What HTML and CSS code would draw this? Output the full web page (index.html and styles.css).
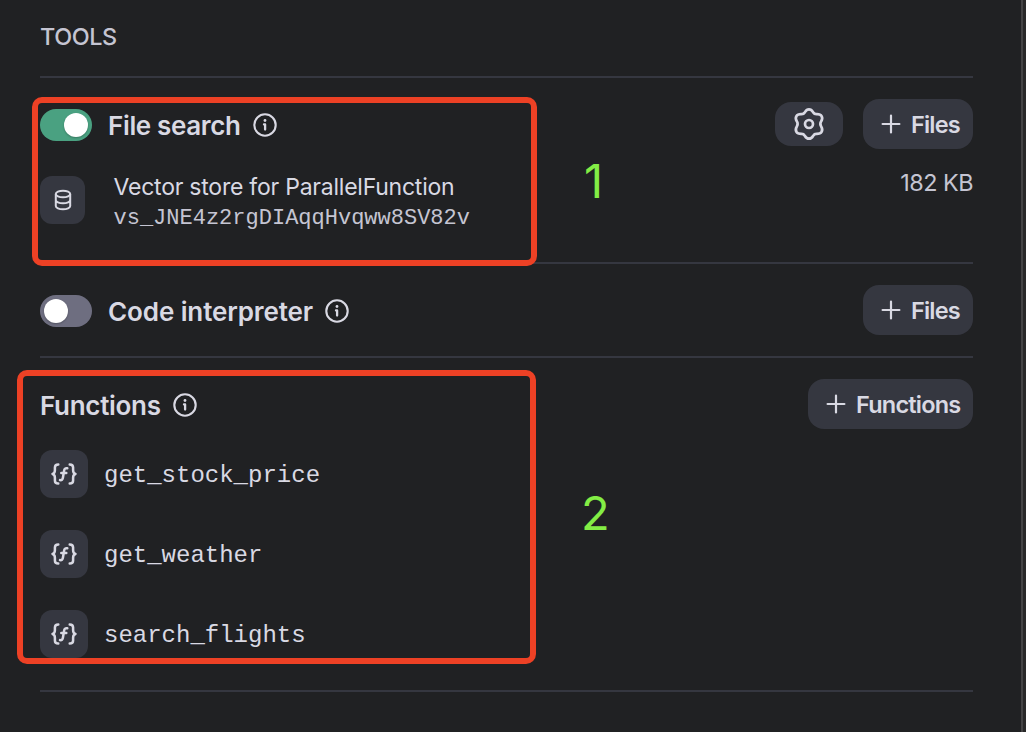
FILE: index.html
```html
<!DOCTYPE html>
<html lang="en">
<head>
<meta charset="utf-8">
<title>Tools</title>
<link rel="stylesheet" href="styles.css">
</head>
<body>
<svg class="defs" width="0" height="0">
  <symbol id="info" viewBox="0 0 24 24"><circle cx="12" cy="12" r="10.7" fill="none" stroke="currentColor" stroke-width="2.1"/><circle cx="12" cy="7.5" r="1.4" fill="currentColor"/><path d="M11 11.4h1.1v5.1" fill="none" stroke="currentColor" stroke-width="2.300" stroke-linecap="round" stroke-linejoin="round"/></symbol>
  <symbol id="plus" viewBox="0 0 20 20"><path d="M10 1.6v16.8M1.6 10h16.8" fill="none" stroke="currentColor" stroke-width="2.2" stroke-linecap="round"/></symbol>
  <symbol id="fn" viewBox="0 0 28 24"><g fill="none" stroke="currentColor" stroke-width="2.5" stroke-linecap="round" stroke-linejoin="round"><path d="M8.300 2.500C5.700 2.500 4.900 3.400 4.900 5.600v2.700c0 2-.6 3.200-2.400 3.700 1.800.5 2.400 1.700 2.400 3.700v2.700c0 2.200.8 3.100 3.400 3.100"/><path d="M19.700 2.500c2.600 0 3.400.9 3.400 3.100v2.700c0 2 .6 3.200 2.400 3.700-1.800.5-2.400 1.700-2.400 3.700v2.700c0 2.200-.8 3.100-3.400 3.100"/><path d="M17.300 6.300c-2-.4-2.900.5-3.200 2.300l-1.200 7.200c-.3 1.800-1.200 2.600-2.900 2.300M11.300 11h5"/></g></symbol>
</svg>
<main class="panel">
  <h1 class="title"><span>TOOLS</span></h1>

  <section class="section search">
    <div class="row">
      <span class="toggle on"></span>
      <h2 class="heading file-search">File search</h2>
      <svg class="info"><use href="#info"/></svg>
      <div class="actions">
        <button class="button gear"><svg width="32" height="34" viewBox="0 0 32 34"><path d="M16 2.300C18.700 2.300 19.400 4 20.300 5.500C21 6.700 22 7.100 23.400 7.100C25.500 7 27.400 7 28.600 9.100C30 11.500 29.200 12.600 28.100 14.400C27.100 16.100 27.100 17.700 28.100 19.400C29.200 21.200 30 22.500 28.600 24.900C27.400 27 25.500 26.900 23.400 26.900C22 26.900 21 27.400 20.300 28.600C19.400 30.100 18.700 31.700 16 31.700S12.600 30.100 11.700 28.600C11 27.400 10 26.900 8.600 26.900C6.500 26.900 4.600 27 3.400 24.900C2 22.500 2.800 21.200 3.900 19.400C4.900 17.700 4.900 16.100 3.900 14.400C2.800 12.600 2 11.500 3.400 9.100C4.600 7 6.500 7 8.600 7.100C10 7.100 11 6.700 11.700 5.500C12.600 4 13.300 2.300 16 2.300Z" fill="none" stroke="currentColor" stroke-width="2.700"/><circle cx="16" cy="17" r="4" fill="none" stroke="currentColor" stroke-width="2.700"/></svg></button>
        <button class="button"><svg class="plus"><use href="#plus"/></svg><span class="files">Files</span></button>
      </div>
    </div>
    <div class="store">
      <span class="tile store-tile"><svg width="18" height="22" viewBox="0 0 18 22"><g fill="none" stroke="currentColor" stroke-width="2"><ellipse cx="9" cy="5" rx="7.200" ry="3.300"/><path d="M1.800 5v12c0 1.800 3.200 3.300 7.200 3.300s7.200-1.500 7.200-3.300V5M1.800 11c0 1.800 3.200 3.300 7.200 3.300s7.200-1.500 7.200-3.300"/></g></svg></span>
      <div class="store-text">
        <div class="store-name"><span>Vector store for ParallelFunction</span></div>
        <div class="store-id">vs_JNE4z2rgDIAqqHvqww8SV82v</div>
      </div>
      <div class="size">182 KB</div>
    </div>
  </section>

  <section class="section interpreter">
    <div class="row">
      <span class="toggle"></span>
      <h2 class="heading code">Code interpreter</h2>
      <svg class="info"><use href="#info"/></svg>
      <div class="actions"><button class="button"><svg class="plus"><use href="#plus"/></svg><span class="files">Files</span></button></div>
    </div>
  </section>

  <section class="section functions">
    <div class="row">
      <h2 class="heading fn-heading">Functions</h2>
      <svg class="info"><use href="#info"/></svg>
      <div class="actions"><button class="button wide"><svg class="plus"><use href="#plus"/></svg><span class="functions-label">Functions</span></button></div>
    </div>
    <ul class="list">
      <li class="item"><span class="tile"><svg class="fn"><use href="#fn"/></svg></span><span class="name">get_stock_price</span></li>
      <li class="item"><span class="tile"><svg class="fn"><use href="#fn"/></svg></span><span class="name">get_weather</span></li>
      <li class="item"><span class="tile"><svg class="fn"><use href="#fn"/></svg></span><span class="name">search_flights</span></li>
    </ul>
  </section>
</main>
<div class="mark mark-one"></div>
<div class="mark mark-two"></div>
<div class="number number-one">1</div>
<div class="number number-two">2</div>
</body>
</html>
```
FILE: styles.css
```css
* { box-sizing: border-box; }
body {
  margin: 0;
  width: 1026px;
  height: 732px;
  overflow: hidden;
  position: relative;
  background: #292929;
  color: #d9d9e3;
  font-family: Inter, "Liberation Sans", sans-serif;
}
.defs { display: none; }
.panel {
  width: 1023px;
  height: 732px;
  padding: 0 48px 0 40px;
  border-right: 2px solid #444445;
  background: #202123;
}
.title {
  margin: 0;
  height: 78px;
  padding-top: 22px;
  border-bottom: 2px solid #353740;
  color: #c5c5d2;
  font-size: 23.4px;
  line-height: 29px;
  font-weight: 500;
  letter-spacing: -0.4px;
}
.section { border-bottom: 2px solid #353740; }
.search { height: 186px; padding-top: 21px; }
.interpreter { height: 94px; padding-top: 21px; }
.functions { height: 334px; padding-top: 21px; }
.row { display: flex; align-items: center; height: 50px; }
.toggle {
  display: flex;
  flex: none;
  width: 52px;
  height: 32px;
  margin: 2px 16px 0 0;
  padding: 4px;
  border-radius: 16px;
  background: #6e6e80;
}
.toggle.on { justify-content: flex-end; background: #4aa181; }
.toggle::after {
  content: "";
  width: 24px;
  height: 24px;
  border-radius: 50%;
  background: #fff;
  box-shadow: 0 1px 2px rgba(0, 0, 0, 0.25);
}
.heading {
  margin: 3px 0 0;
  font-size: 26px;
  line-height: 32px;
  font-weight: 600;
  letter-spacing: -0.3px;
  white-space: nowrap;
}
.file-search { width: 145px; letter-spacing: -0.35px; }
.code { width: 217px; letter-spacing: -0.1px; }
.fn-heading { width: 133px; }
.info { flex: none; width: 24px; height: 24px; margin-top: 2px; overflow: visible; }
.actions { display: flex; align-items: center; gap: 20px; margin-left: auto; }
.button {
  display: flex;
  align-items: center;
  width: 110px;
  height: 50px;
  padding: 1px 0 0 18px;
  border: 0;
  border-radius: 16px;
  background: #353740;
  color: #d9d9e3;
  font: 600 23.5px/30px Inter, "Liberation Sans", sans-serif;
  letter-spacing: -0.8px;
  white-space: nowrap;
}
.button.wide { width: 165px; }
.button.gear { justify-content: center; width: 68px; height: 44px; padding: 0; }
.plus { flex: none; width: 20px; height: 20px; margin: 0 10px 1px 0; }
.store { display: flex; align-items: flex-start; padding-top: 17px; }
.tile {
  display: flex;
  flex: none;
  align-items: center;
  justify-content: center;
  width: 48px;
  height: 48px;
  border-radius: 12px;
  background: #353740;
}
.store-tile { width: 45px; margin: 10px 28.500px 0 0; padding-left: 1px; }
.store-text { padding-top: 5px; }
.store-name { font-size: 23px; line-height: 32px; letter-spacing: -0.230px; white-space: nowrap; }
.store-id {
  padding-top: 1px;
  color: #c5c5d2;
  font-family: "Liberation Mono", monospace;
  font-size: 22px;
  line-height: 30px;
}
.size {
  margin-left: auto;
  padding-top: 2px;
  color: #c5c5d2;
  font-size: 23.400px;
  line-height: 30px;
  letter-spacing: -0.5px;
}
.list { display: grid; gap: 32px; margin: 0; padding: 21px 0 0; list-style: none; }
.item {
  display: flex;
  align-items: center;
  gap: 16px;
  height: 48px;
  font: 24px/30px "Liberation Mono", monospace;
}
.name { padding-top: 4px; }
.fn { width: 28px; height: 24px; }
.mark { position: absolute; border: 6px solid #ed4125; border-radius: 10px; }
.mark-one { left: 32px; top: 97px; width: 505px; height: 169px; }
.mark-two { left: 17px; top: 370px; width: 519px; height: 294px; }
.number {
  position: absolute;
  color: #83ed45;
  font-size: 47px;
  line-height: 56px;
}
.number-one { left: 584px; top: 153px; }
.number-two { left: 581px; top: 485px; }
```
